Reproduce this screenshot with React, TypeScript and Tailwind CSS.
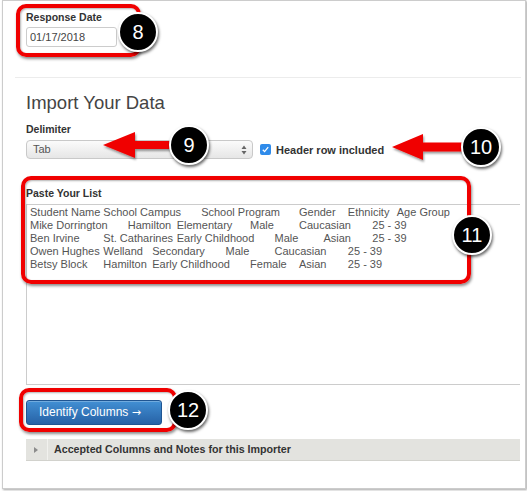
import React from "react"

function Badge({ n, className }: { n: string; className: string }) {
  return (
    <div
      className={`absolute w-[40px] h-[40px] rounded-full bg-black border-2 border-white shadow-[1px_2px_3px_rgba(0,0,0,0.6)] flex items-center justify-center text-white text-[20px] leading-none ${className}`}
    >
      {n}
    </div>
  )
}

const pasted =
  "Student Name School Campus\tSchool Program\tGender\tEthnicity\tAge Group\n" +
  "Mike Dorrington\tHamilton\tElementary\tMale\tCaucasian\t25 - 39\n" +
  "Ben Irvine\tSt. Catharines\tEarly Childhood\tMale\tAsian\t25 - 39\n" +
  "Owen Hughes\tWelland\tSecondary\tMale\tCaucasian\t25 - 39\n" +
  "Betsy Block\tHamilton\tEarly Childhood\tFemale\tAsian\t25 - 39"

export default function App() {
  return (
    <div className="relative w-[527px] h-[491px] bg-white overflow-hidden font-['Liberation_Sans',Arial,sans-serif] text-[#333]">
      {/* window frame */}
      <div className="ml-[2px] w-[524px] h-[489px] border border-[#cccccc] shadow-[1px_1px_2px_rgba(0,0,0,0.35)]">
        <div className="pl-[23px] pr-[5px] pt-[9px]">
          {/* response date */}
          <div className="text-[10.5px] leading-[14px] font-bold">Response Date</div>
          <input
            defaultValue="01/17/2018"
            className="mt-[3px] w-[91px] h-[20px] border border-[#cccccc] rounded-[3px] px-[3px] text-[11px] text-[#444] outline-none"
          />

          {/* divider */}
          <div className="mt-[29px] -ml-[11px] -mr-[1px] border-t border-[#ececec]"></div>

          <h2 className="mt-[14px] text-[18.5px] leading-[22px] text-[#444]">Import Your Data</h2>

          <div className="mt-[8px] text-[10.5px] leading-[14px] font-bold">Delimiter</div>
          <div className="mt-[4px] flex items-center">
            <div className="w-[227px] h-[19px] rounded-[4px] border border-[#c9c9c9] bg-gradient-to-b from-[#fbfbfb] to-[#e6e6e6] flex items-center justify-between pl-[6px] pr-[5px]">
              <span className="text-[11px] text-[#555]">Tab</span>
              <svg width="6" height="10" viewBox="0 0 6 10" className="text-[#666]">
                <path d="M3 0.5L5.5 4H0.5z M3 9.5L0.5 6h5z" fill="currentColor" />
              </svg>
            </div>
            <div className="ml-[7px] w-[11px] h-[11px] rounded-[2px] bg-[#2f8bea] flex items-center justify-center">
              <svg width="9" height="9" viewBox="0 0 9 9">
                <path d="M1.8 4.8l1.8 1.8 3.6-4.4" stroke="white" strokeWidth="1.3" fill="none" />
              </svg>
            </div>
            <span className="ml-[5px] text-[11px] leading-[14px] font-bold">Header row included</span>
          </div>

          {/* paste list */}
          <div className="mt-[27px] text-[10.5px] leading-[14px] font-bold">Paste Your List</div>
          <textarea
            defaultValue={pasted}
            wrap="off"
            className="mt-[4px] block w-full h-[181px] border border-r-0 border-[#cccccc] pl-[3px] pt-[1px] text-[11px] leading-[12.9px] text-[#555] font-['Liberation_Sans',Arial,sans-serif] [tab-size:8] resize-none outline-none whitespace-pre overflow-hidden"
          />

          <button className="mt-[15px] block w-[136px] h-[25px] rounded-[3px] border border-[#1f5592] bg-gradient-to-b from-[#4290d4] to-[#2762a6] text-white text-[12px] text-left pl-[12px] shadow-[inset_0_1px_0_rgba(255,255,255,0.25)]">
            Identify Columns <span className="font-['DejaVu_Sans',sans-serif] text-[11px]">→</span>
          </button>

          {/* accordion */}
          <div className="mt-[14px] h-[22px] flex bg-[#e3e3df] border-b border-[#d2d2cd]">
            <div className="w-[22px] flex items-center pl-[8px] border-r border-[#f1f1ee]">
              <svg width="4" height="6" viewBox="0 0 4 6">
                <path d="M0 0L4 3L0 6z" fill="#8c8c8c" />
              </svg>
            </div>
            <div className="pl-[6px] flex items-center text-[10.7px] font-bold text-[#333]">
              Accepted Columns and Notes for this Importer
            </div>
          </div>
        </div>
      </div>

      {/* annotations */}
      <div className="absolute left-[16px] top-[4px] w-[125px] h-[53px] border-[4px] border-[#f00000] rounded-[10px] shadow-[1px_2px_3px_rgba(0,0,0,0.45),inset_1px_1px_2px_rgba(0,0,0,0.3)]"></div>
      <div className="absolute left-[21px] top-[176px] w-[450px] h-[108px] border-[4px] border-[#f00000] rounded-[10px] shadow-[1px_2px_3px_rgba(0,0,0,0.45),inset_1px_1px_2px_rgba(0,0,0,0.3)]"></div>
      <div className="absolute left-[19px] top-[388px] w-[158px] h-[44px] border-[4px] border-[#f00000] rounded-[10px] shadow-[1px_2px_3px_rgba(0,0,0,0.45),inset_1px_1px_2px_rgba(0,0,0,0.3)]"></div>

      <svg className="absolute left-0 top-0 pointer-events-none" width="527" height="491" viewBox="0 0 527 491">
        <defs>
          <filter id="sh" x="-10%" y="-30%" width="130%" height="170%">
            <feDropShadow dx="1" dy="2" stdDeviation="1.2" floodColor="#000" floodOpacity="0.4" />
          </filter>
        </defs>
        <polygon
          points="103,145 135,132 135,141 180,141 180,149 135,149 135,158"
          fill="#f00000"
          filter="url(#sh)"
        />
        <polygon
          points="392,147 423,134 423,142.5 465,142.5 465,151.5 423,151.5 423,160"
          fill="#f00000"
          filter="url(#sh)"
        />
      </svg>

      <Badge n="8" className="left-[118px] top-[12px]" />
      <Badge n="9" className="left-[169px] top-[125px]" />
      <Badge n="10" className="left-[461px] top-[127px]" />
      <Badge n="11" className="left-[452px] top-[215px]" />
      <Badge n="12" className="left-[168px] top-[390px]" />
    </div>
  )
}
